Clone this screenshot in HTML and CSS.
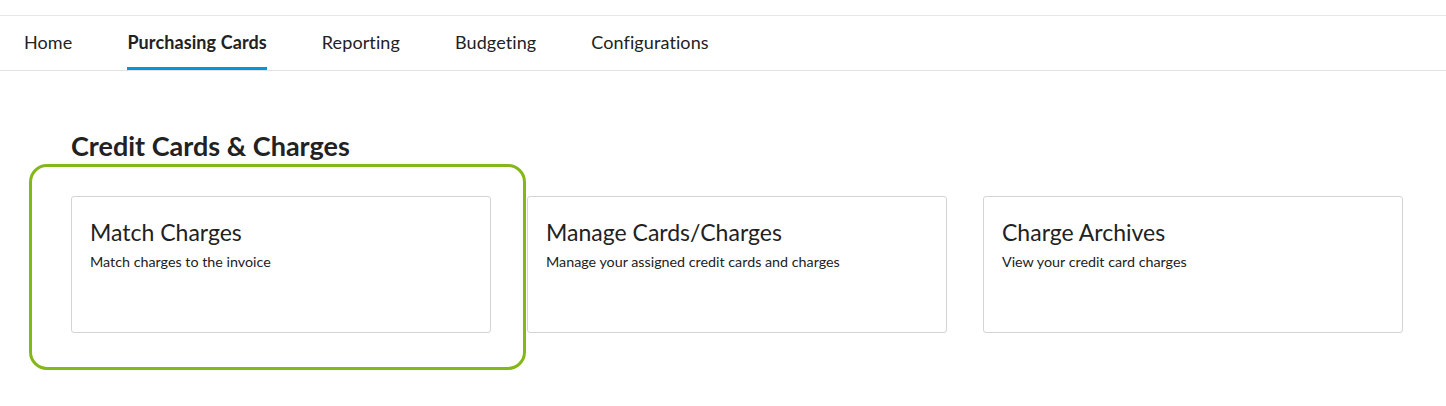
FILE: index.html
```html
<!DOCTYPE html>
<html lang="en">
<head>
<meta charset="utf-8">
<title>Purchasing Cards</title>
<link rel="stylesheet" href="styles.css">
</head>
<body>
<div class="topgap"></div>
<nav class="tabs">
  <a class="tab">Home</a>
  <a class="tab active">Purchasing Cards</a>
  <a class="tab">Reporting</a>
  <a class="tab">Budgeting</a>
  <a class="tab">Configurations</a>
</nav>
<main class="content">
  <h1 class="section-title">Credit Cards &amp; Charges</h1>
  <div class="cards">
    <div class="highlight"></div>
    <div class="card">
      <h2 class="card-title">Match Charges</h2>
      <p class="card-desc">Match charges to the invoice</p>
    </div>
    <div class="card">
      <h2 class="card-title">Manage Cards/Charges</h2>
      <p class="card-desc">Manage your assigned credit cards and charges</p>
    </div>
    <div class="card">
      <h2 class="card-title">Charge Archives</h2>
      <p class="card-desc">View your credit card charges</p>
    </div>
  </div>
</main>
</body>
</html>
```
FILE: styles.css
```css
* { box-sizing: border-box; }
html, body { margin: 0; padding: 0; background: #fff; }
body {
  font-family: Lato, "Open Sans", "Liberation Sans", sans-serif;
  color: #222;
  min-height: 406px;
}
.topgap { height: 15px; }
.tabs {
  display: flex;
  gap: 55px;
  padding-left: 24px;
  border-top: 1px solid #e6e6e6;
  border-bottom: 1px solid #e2e2e2;
  height: 56px;
}
.tab {
  display: block;
  height: 54px;
  padding-top: 16px;
  font-size: 18px;
  line-height: 21px;
  letter-spacing: 0.1px;
  color: #222;
  border-bottom: 3px solid transparent;
  cursor: pointer;
}
.tab.active {
  font-weight: 700;
  border-bottom-color: #0b93d8;
}
.content { padding: 0 0 40px 71px; }
.section-title {
  margin: 59px 0 0;
  font-size: 27px;
  line-height: 32px;
  font-weight: 700;
  color: #222;
}
.cards {
  position: relative;
  display: grid;
  grid-template-columns: repeat(3, 420px);
  gap: 36px;
  margin-top: 34px;
}
.card {
  height: 137px;
  border: 1px solid #d4d4d4;
  border-radius: 3px;
  padding: 21px 18px 0;
  background: #fff;
}
.card-title {
  margin: 0;
  font-size: 23px;
  line-height: 28px;
  font-weight: 400;
  color: #222;
}
.card-desc {
  margin: 7px 0 0;
  font-size: 14.3px;
  line-height: 18px;
  color: #222;
}
.highlight {
  position: absolute;
  left: -42px;
  top: -32px;
  width: 497px;
  height: 206px;
  border: 3px solid #84b71a;
  border-radius: 18px;
  pointer-events: none;
}
```
